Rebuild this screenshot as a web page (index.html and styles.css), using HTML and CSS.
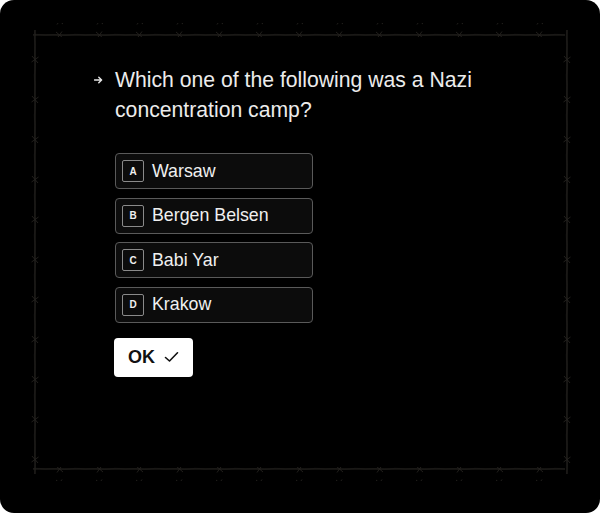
FILE: index.html
```html
<!DOCTYPE html>
<html lang="en">
<head>
<meta charset="utf-8">
<title>Quiz</title>
<link rel="stylesheet" href="styles.css">
</head>
<body>
<div class="card">
  <svg class="wire" width="600" height="513" viewBox="0 0 600 513" aria-hidden="true">
    <defs>
      <pattern id="wh" x="0" y="0" width="40" height="14" patternUnits="userSpaceOnUse">
        <path d="M0 7 L40 7" stroke="#262320" stroke-width="1.1"/>
        <path d="M0 6.5 C7 8 13 5.5 20 7 C27 8.5 33 5.5 40 6.5" stroke="#1c1a18" stroke-width="0.8" fill="none"/>
        <path d="M16 4 L23 10 M22 3.5 L17 10.5" stroke="#24211e" stroke-width="0.9"/>
      </pattern>
      <pattern id="wv" x="0" y="0" width="14" height="40" patternUnits="userSpaceOnUse">
        <path d="M7 0 L7 40" stroke="#262320" stroke-width="1.1"/>
        <path d="M6.5 0 C8 7 5.5 13 7 20 C8.5 27 5.5 33 6.5 40" stroke="#1c1a18" stroke-width="0.8" fill="none"/>
        <path d="M4 16 L10 23 M3.5 22 L10.5 17" stroke="#24211e" stroke-width="0.9"/>
      </pattern>
    </defs>
    <rect x="33" y="23" width="532" height="14" fill="url(#wh)"/>
    <rect x="33" y="467" width="532" height="14" fill="url(#wh)"/>
    <rect x="26" y="30" width="14" height="444" fill="url(#wv)"/>
    <rect x="558" y="30" width="14" height="444" fill="url(#wv)"/>
  </svg>

  <div class="content">
    <div class="question">
      <span class="arrow">
        <svg width="9" height="8" viewBox="0 0 9 8"><path d="M0.5 4 H7.5 M4.8 1.2 L7.6 4 L4.8 6.8" stroke="#e6e6e6" stroke-width="1.4" fill="none" stroke-linecap="round" stroke-linejoin="round"/></svg>
      </span>
      <h1 class="qtext">Which one of the following was a Nazi concentration camp?</h1>
    </div>

    <ul class="options">
      <li class="option"><span class="key">A</span><span class="label">Warsaw</span></li>
      <li class="option"><span class="key">B</span><span class="label">Bergen Belsen</span></li>
      <li class="option"><span class="key">C</span><span class="label">Babi Yar</span></li>
      <li class="option"><span class="key">D</span><span class="label">Krakow</span></li>
    </ul>

    <button class="ok">OK
      <svg width="15" height="12" viewBox="0 0 15 12"><path d="M1.5 6.5 L5.5 10 L13.5 1.8" stroke="#111" stroke-width="1.6" fill="none" stroke-linecap="round" stroke-linejoin="round"/></svg>
    </button>
  </div>
</div>
</body>
</html>
```

FILE: styles.css
```css
html, body {
  margin: 0;
  padding: 0;
  background: #ffffff;
}

.card {
  position: relative;
  width: 600px;
  height: 513px;
  background: #000000;
  border-radius: 14px;
  overflow: hidden;
  font-family: "Liberation Sans", Arial, sans-serif;
  color: #e8e8e8;
}

.wire {
  position: absolute;
  left: 0;
  top: 0;
  pointer-events: none;
}

.content {
  position: relative;
  padding: 65px 0 0 92px;
}

.question {
  display: flex;
  align-items: flex-start;
}

.arrow {
  width: 23px;
  display: flex;
  padding-top: 11px;
  padding-left: 2px;
  box-sizing: border-box;
}

.qtext {
  margin: 0;
  width: 400px;
  font-size: 21.2px;
  font-weight: 400;
  line-height: 30px;
  color: #ececec;
}

.options {
  list-style: none;
  margin: 28px 0 0 23px;
  padding: 0;
  display: flex;
  flex-direction: column;
  gap: 8.5px;
  width: 198px;
}

.option {
  display: flex;
  align-items: center;
  gap: 8px;
  height: 36px;
  box-sizing: border-box;
  padding: 0 6px;
  border: 1px solid #5a5a5a;
  border-radius: 4px;
  background: #0c0c0c;
}

.key {
  display: flex;
  align-items: center;
  justify-content: center;
  width: 22px;
  height: 22px;
  box-sizing: border-box;
  border: 1px solid #8a8a8a;
  border-radius: 2px;
  font-size: 10px;
  font-weight: 700;
  color: #f0f0f0;
}

.label {
  font-size: 17.8px;
  color: #f0f0f0;
}

.ok {
  margin: 15px 0 0 22px;
  display: flex;
  align-items: center;
  gap: 9px;
  height: 39px;
  padding: 0 14px;
  border: none;
  border-radius: 4px;
  background: #ffffff;
  font-family: "Liberation Sans", Arial, sans-serif;
  font-size: 18px;
  font-weight: 700;
  color: #111111;
}
```
